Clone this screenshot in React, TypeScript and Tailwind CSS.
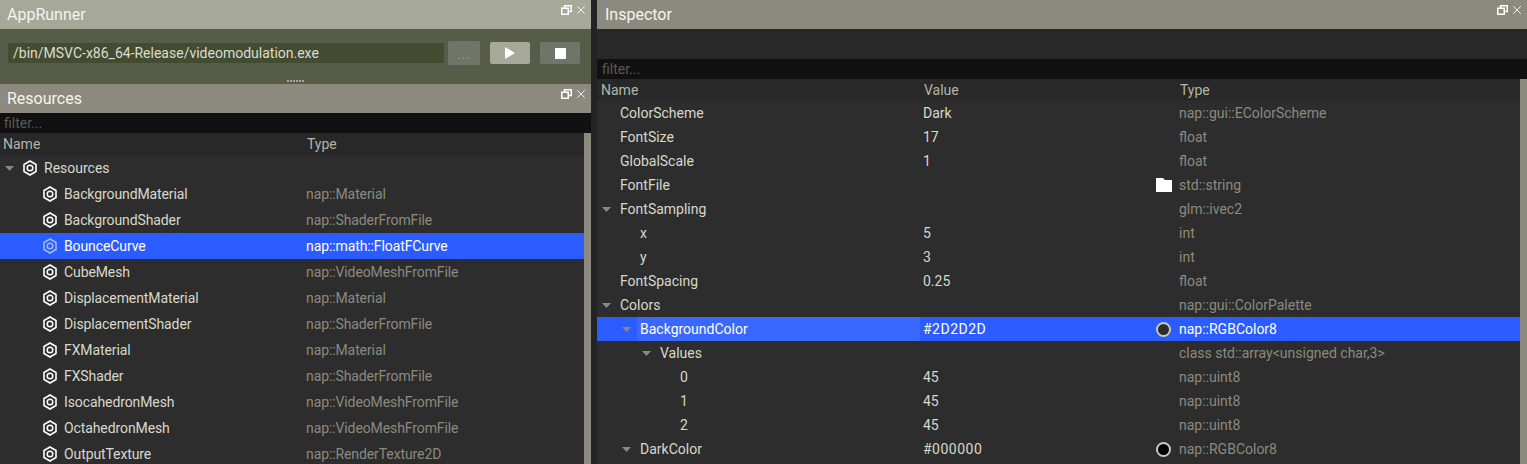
import { X } from 'lucide-react'

const font = "[font-family:Roboto,'Noto_Sans',sans-serif]"

function RestoreIcon() {
  return (
    <svg width="11" height="10" viewBox="0 0 11 10" className="shrink-0">
      <path d="M3.5 3V0.75H10.25V6.5H7.5" fill="none" stroke="#fff" strokeWidth="1.5" />
      <rect x="0.75" y="3.25" width="6.5" height="6" fill="none" stroke="#fff" strokeWidth="1.5" />
    </svg>
  )
}

function TitleBar({ title, color, inset }: { title: string; color: string; inset: string }) {
  return (
    <div className={`flex h-[29px] shrink-0 justify-between pr-[3px] ${inset} ${color}`}>
      <span className="pt-[6px] text-[16px] leading-[18px] text-[#f4f4ee]">{title}</span>
      <div className="flex gap-[2px] pt-[3px]">
        <span className="pt-[2px]"><RestoreIcon /></span>
        <X size={14} strokeWidth={1.4} color="#fff" />
      </div>
    </div>
  )
}

function HexIcon({ selected }: { selected?: boolean }) {
  const c = selected ? '#9fb8ff' : '#ffffff'
  return (
    <svg width="14" height="16" viewBox="0 0 14 16" className="shrink-0">
      <path d="M7 1 L13 4.5 V11.5 L7 15 L1 11.5 V4.5 Z" fill="none" stroke={c} strokeWidth="1.6" />
      <circle cx="7" cy="8" r="2.8" fill="none" stroke={c} strokeWidth="1.5" />
    </svg>
  )
}

function Arrow() {
  return (
    <svg width="9" height="5" viewBox="0 0 9 5" className="shrink-0">
      <path d="M0 0H9L4.5 5Z" fill="#8c8a7f" />
    </svg>
  )
}

function FolderIcon() {
  return (
    <svg width="16" height="14" viewBox="0 0 16 14">
      <path d="M0 0H7L9 2H16V14H0Z" fill="#fff" />
    </svg>
  )
}

const resources = [
  ['BackgroundMaterial', 'nap::Material'],
  ['BackgroundShader', 'nap::ShaderFromFile'],
  ['BounceCurve', 'nap::math::FloatFCurve'],
  ['CubeMesh', 'nap::VideoMeshFromFile'],
  ['DisplacementMaterial', 'nap::Material'],
  ['DisplacementShader', 'nap::ShaderFromFile'],
  ['FXMaterial', 'nap::Material'],
  ['FXShader', 'nap::ShaderFromFile'],
  ['IsocahedronMesh', 'nap::VideoMeshFromFile'],
  ['OctahedronMesh', 'nap::VideoMeshFromFile'],
  ['OutputTexture', 'nap::RenderTexture2D'],
]

type Prop = {
  name: string
  value?: string
  type: string
  depth: number
  open?: boolean
  selected?: boolean
  mark?: 'folder' | 'bg' | 'black'
}

const props: Prop[] = [
  { name: 'ColorScheme', value: 'Dark', type: 'nap::gui::EColorScheme', depth: 0 },
  { name: 'FontSize', value: '17', type: 'float', depth: 0 },
  { name: 'GlobalScale', value: '1', type: 'float', depth: 0 },
  { name: 'FontFile', type: 'std::string', depth: 0, mark: 'folder' },
  { name: 'FontSampling', type: 'glm::ivec2', depth: 0, open: true },
  { name: 'x', value: '5', type: 'int', depth: 1 },
  { name: 'y', value: '3', type: 'int', depth: 1 },
  { name: 'FontSpacing', value: '0.25', type: 'float', depth: 0 },
  { name: 'Colors', type: 'nap::gui::ColorPalette', depth: 0, open: true },
  { name: 'BackgroundColor', value: '#2D2D2D', type: 'nap::RGBColor8', depth: 1, open: true, selected: true, mark: 'bg' },
  { name: 'Values', type: 'class std::array<unsigned char,3>', depth: 2, open: true },
  { name: '0', value: '45', type: 'nap::uint8', depth: 3 },
  { name: '1', value: '45', type: 'nap::uint8', depth: 3 },
  { name: '2', value: '45', type: 'nap::uint8', depth: 3 },
  { name: 'DarkColor', value: '#000000', type: 'nap::RGBColor8', depth: 1, open: true, mark: 'black' },
]

const indents = ['pl-[23px]', 'pl-[43px]', 'pl-[63px]', 'pl-[83px]']
const arrowSpots = ['pl-[5px]', 'pl-[25px]', 'pl-[45px]', 'pl-[65px]']

function PropRow({ row }: { row: Prop }) {
  const textColor = row.selected ? 'text-white' : 'text-[#d8d8cc]'
  return (
    <div className={`flex h-[24px] shrink-0 items-center text-[14px] ${row.selected ? 'bg-[#2a5cff]' : ''}`}>
      <div className={`flex h-full w-[323px] shrink-0 items-center ${textColor} ${row.open ? arrowSpots[row.depth] : indents[row.depth]}`}>
        {row.open && <span className="mr-[9px]"><Arrow /></span>}
        <span className={row.selected ? 'flex h-full flex-1 items-center bg-[#3a68ff] pl-[3px] -ml-[3px]' : ''}>{row.name}</span>
      </div>
      <div className={`flex h-full w-[231px] shrink-0 items-center pl-[3px] ${textColor}`}>
        <span className={row.value?.startsWith('#') ? 'tracking-[0.5px]' : ''}>{row.value}</span>
      </div>
      <div className="flex w-[25px] shrink-0 justify-center">
        {row.mark === 'folder' && <FolderIcon />}
        {row.mark === 'bg' && <span className="h-[15px] w-[15px] rounded-full border-2 border-[#c8c8bc] bg-[#2d2d2d]" />}
        {row.mark === 'black' && <span className="h-[15px] w-[15px] rounded-full border-2 border-[#c8c8bc] bg-black" />}
      </div>
      <span className={`pl-[3px] ${row.selected ? 'text-white' : 'text-[#8c8a7f]'}`}>{row.type}</span>
    </div>
  )
}

export default function App() {
  return (
    <div className={`flex h-[464px] w-[1527px] overflow-hidden bg-[#232323] ${font}`}>
      <div className="flex w-[591px] shrink-0 flex-col">
        <TitleBar title="AppRunner" color="bg-[#a6a898]" inset="pl-[7px]" />
        <div className="flex h-[55px] shrink-0 flex-col bg-[#565c47]">
          <div className="flex items-center pl-[8px] pt-[12px]">
            <div className="flex h-[20px] w-[436px] items-center bg-[#434c31] pl-[5px] text-[14px] text-[#dcdccc]">
              /bin/MSVC-x86_64-Release/videomodulation.exe
            </div>
            <div className="ml-[4px] flex h-[24px] w-[32px] items-end justify-center rounded-[2px] bg-[#70756a] pb-[5px] text-[12px] leading-[10px] tracking-[1px] text-[#a6a898]">
              ...
            </div>
            <button className="ml-[10px] flex h-[22px] w-[40px] items-center justify-center rounded-[2px] bg-[#a6a898]">
              <svg width="10" height="12" viewBox="0 0 10 12"><path d="M0 0L10 6L0 12Z" fill="#fff" /></svg>
            </button>
            <button className="ml-[10px] flex h-[22px] w-[40px] items-center justify-center rounded-[2px] bg-[#70756a]">
              <span className="h-[11px] w-[11px] bg-white" />
            </button>
          </div>
          <div className="mt-[15px] flex justify-center gap-[1px]">
            {[0, 1, 2, 3, 4, 5].map(i => (
              <span key={i} className="h-[2px] w-[2px] bg-[#a6a898]" />
            ))}
          </div>
        </div>
        <TitleBar title="Resources" color="bg-[#8c8a7f]" inset="pl-[7px]" />
        <div className="flex h-[20px] shrink-0 items-center bg-[#111111] pl-[4px] text-[14px] text-[#5a5a52]">filter...</div>
        <div className="flex min-h-0 flex-1">
          <div className="flex w-[584px] shrink-0 flex-col bg-[#2d2d2d] text-[14px]">
            <div className="flex h-[22px] shrink-0 items-center bg-[#282828] pl-[3px] text-[#b4b4a8]">
              <span className="w-[304px]">Name</span>
              <span>Type</span>
            </div>
            <div className="flex h-[26px] shrink-0 items-center pl-[5px] text-[#d8d8cc]">
              <Arrow />
              <span className="ml-[9px] mr-[7px]"><HexIcon /></span>
              Resources
            </div>
            {resources.map(([name, type]) => {
              const selected = name === 'BounceCurve'
              return (
                <div key={name} className={`flex h-[26px] shrink-0 items-center pl-[43px] tracking-[-0.1px] ${selected ? 'bg-[#2a5cff] text-white' : 'text-[#d8d8cc]'}`}>
                  <HexIcon selected={selected} />
                  <span className="ml-[7px] w-[242px]">{name}</span>
                  <span className={selected ? 'text-white' : 'text-[#8c8a7f]'}>{type}</span>
                </div>
              )
            })}
          </div>
          <div className="w-[7px] shrink-0 bg-[#8c8a7f]" />
        </div>
      </div>
      <div className="ml-[6px] flex min-w-0 flex-1 flex-col">
        <TitleBar title="Inspector" color="bg-[#8c8a7f]" inset="pl-[8px]" />
        <div className="h-[30px] shrink-0 bg-[#282828]" />
        <div className="flex h-[20px] shrink-0 items-center bg-[#111111] pl-[5px] text-[14px] text-[#5a5a52]">filter...</div>
        <div className="flex min-h-0 flex-1">
          <div className="flex w-[923px] shrink-0 flex-col bg-[#2d2d2d]">
            <div className="flex h-[22px] shrink-0 items-center bg-[#282828] pl-[4px] text-[14px] text-[#b4b4a8]">
              <span className="w-[323px]">Name</span>
              <span className="w-[256px]">Value</span>
              <span>Type</span>
            </div>
            {props.map(row => (
              <PropRow key={row.name} row={row} />
            ))}
          </div>
          <div className="w-[7px] shrink-0 bg-[#8c8a7f]" />
        </div>
      </div>
    </div>
  )
}
